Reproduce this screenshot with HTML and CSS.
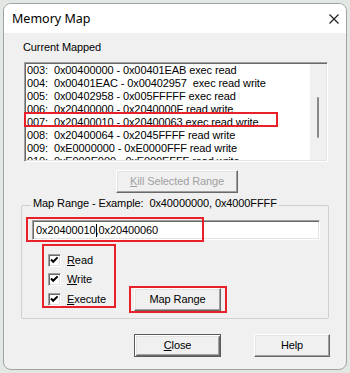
FILE: index.html
```html
<!DOCTYPE html>
<html>
<head>
<meta charset="utf-8">
<title>Memory Map</title>
<link rel="stylesheet" href="styles.css">
</head>
<body>
<div class="window">
  <div class="titlebar">
    <span class="title">Memory Map</span>
    <svg class="close-x" width="10" height="10" viewBox="0 0 10 10"><path d="M0.5 0.5L9.5 9.5M9.5 0.5L0.5 9.5" stroke="#1a1a1a" stroke-width="1.1" fill="none"/></svg>
  </div>
  <div class="client">
    <div class="label">Current Mapped</div>
    <div class="listbox">
      <div class="rows">
        <div class="row">003:  0x00400000 - 0x00401EAB exec read</div>
        <div class="row">004:  0x00401EAC - 0x00402957  exec read write</div>
        <div class="row">005:  0x00402958 - 0x005FFFFF exec read</div>
        <div class="row">006:  0x20400000 - 0x2040000F read write</div>
        <div class="row">007:  0x20400010 - 0x20400063 exec read write</div>
        <div class="row">008:  0x20400064 - 0x2045FFFF read write</div>
        <div class="row">009:  0xE0000000 - 0xE0000FFF read write</div>
        <div class="row">010:  0xE000E000 - 0xE000EFFF read write</div>
      </div>
      <div class="scrollbar"><div class="thumb"></div></div>
      <div class="mark mark-row"></div>
    </div>
    <div class="btn btn-kill disabled"><span><u>K</u>ill Selected Range</span></div>
    <div class="group">
      <div class="group-label">Map Range - Example:  0x40000000, 0x4000FFFF</div>
      <div class="textbox"><span>0x20400010</span><span class="caret"></span><span>,0x20400060</span></div>
      <div class="group-row">
        <div class="checks">
          <div class="cbrow first"><span class="cb"><svg width="13" height="13" viewBox="0 0 13 13"><path d="M3 5.5L5.2 7.8L9.6 3.4" stroke="#000" stroke-width="2" fill="none"/></svg></span><span class="cblabel"><u>R</u>ead</span></div>
          <div class="cbrow"><span class="cb"><svg width="13" height="13" viewBox="0 0 13 13"><path d="M3 5.5L5.2 7.8L9.6 3.4" stroke="#000" stroke-width="2" fill="none"/></svg></span><span class="cblabel"><u>W</u>rite</span></div>
          <div class="cbrow"><span class="cb"><svg width="13" height="13" viewBox="0 0 13 13"><path d="M3 5.5L5.2 7.8L9.6 3.4" stroke="#000" stroke-width="2" fill="none"/></svg></span><span class="cblabel"><u>E</u>xecute</span></div>
        </div>
        <div class="btn btn-map">Map Range</div>
      </div>
      <div class="mark mark-input"></div>
      <div class="mark mark-checks"></div>
      <div class="mark mark-map"></div>
    </div>
    <div class="footer">
      <div class="btn btn-close default"><span><u>C</u>lose</span></div>
      <div class="btn btn-help">Help</div>
    </div>
  </div>
</div>
</body>
</html>
```

FILE: styles.css
```css
html, body {
  margin: 0;
  padding: 0;
}
body {
  width: 350px;
  height: 373px;
  overflow: hidden;
  background: #e3e7e3;
  font-family: "Liberation Sans", Arial, sans-serif;
  font-size: 11px;
  letter-spacing: -0.1px;
  color: #000;
}
.window {
  margin: 3px 0 0 3px;
  width: 344px;
  height: 367px;
  box-sizing: border-box;
  border: 1px solid #a3a3a3;
  border-radius: 8px;
  background: #f0f0f0;
  overflow: hidden;
  display: flex;
  flex-direction: column;
}
.titlebar {
  height: 29px;
  flex-shrink: 0;
  background: #fff;
  display: flex;
  align-items: center;
  padding: 0 7px 0 8px;
}
.title {
  font-family: "Noto Sans", "Open Sans", sans-serif;
  font-size: 12.5px;
  letter-spacing: 0;
  color: #000;
}
.close-x {
  margin-left: auto;
  display: block;
}
.client {
  flex: 1;
  position: relative;
}
.label {
  margin: 8px 0 0 19px;
  height: 13px;
  line-height: 13px;
}
.listbox {
  position: relative;
  margin: 8px 0 0 20px;
  width: 304px;
  height: 100px;
  box-sizing: border-box;
  border: 1px solid;
  border-color: #a0a0a0 #fff #fff #a0a0a0;
  box-shadow: inset 1px 1px 0 #696969, inset -1px -1px 0 #e3e3e3;
  padding: 1px;
  display: flex;
  background: #fff;
}
.rows {
  flex: 1;
  overflow: hidden;
  padding-left: 1px;
  background: #fff;
}
.row {
  height: 13px;
  line-height: 13px;
  white-space: pre;
}
.scrollbar {
  width: 16px;
  background: #f0f0f0;
}
.thumb {
  margin: 33px 0 0 7px;
  width: 2px;
  height: 41px;
  background: #8a8a8a;
  border-radius: 1px;
}
.mark {
  position: absolute;
  box-sizing: border-box;
  border: 2px solid #e8202a;
}
.mark-row {
  left: -1px;
  top: 49px;
  width: 254px;
  height: 15px;
}
.btn {
  box-sizing: border-box;
  height: 23px;
  background: #f0f0f0;
  border: 1px solid;
  border-color: #fff #696969 #696969 #fff;
  box-shadow: inset -1px -1px 0 #a0a0a0, inset 1px 1px 0 #e3e3e3;
  display: flex;
  align-items: center;
  justify-content: center;
  line-height: 13px;
}
.btn.disabled {
  color: #a0a0a0;
}
.btn.default {
  border: 1px solid #5a5a5a;
  box-shadow: inset 1px 1px 0 #fff, inset -1px -1px 0 #696969, inset 2px 2px 0 #e3e3e3, inset -2px -2px 0 #a0a0a0;
}
.btn-kill {
  margin: 8px 0 0 112px;
  width: 122px;
}
.group {
  position: relative;
  margin: 12px 0 0 17px;
  width: 308px;
  height: 114px;
  box-sizing: border-box;
  border: 1px solid #d0d0d0;
  border-radius: 2px;
}
.group-label {
  position: absolute;
  left: 9px;
  top: -9px;
  padding: 0 2px;
  background: #f0f0f0;
  line-height: 13px;
  white-space: pre;
}
.textbox {
  margin: 14px 0 0 10px;
  width: 288px;
  height: 20px;
  box-sizing: border-box;
  border: 1px solid;
  border-color: #a0a0a0 #fff #fff #a0a0a0;
  box-shadow: inset 1px 1px 0 #696969, inset -1px -1px 0 #e3e3e3;
  background: #fff;
  padding: 0 0 0 3px;
  display: flex;
  align-items: center;
  line-height: 13px;
  white-space: pre;
}
.caret {
  width: 1px;
  height: 13px;
  background: #000;
  margin-right: -1px;
}
.group-row {
  display: flex;
  margin: 11px 0 0 26px;
}
.checks {
  width: 86px;
}
.cbrow {
  height: 20px;
  display: flex;
  align-items: flex-start;
}
.cbrow.first {
  height: 19px;
}
.cb {
  margin-top: 3px;
  width: 13px;
  height: 13px;
  box-sizing: border-box;
  border: 1px solid;
  border-color: #a0a0a0 #fff #fff #a0a0a0;
  box-shadow: inset 1px 1px 0 #696969, inset -1px -1px 0 #e3e3e3;
  background: #fff;
  position: relative;
}
.cb svg {
  position: absolute;
  left: -1px;
  top: -1px;
}
.cblabel {
  margin: 3px 0 0 6px;
  line-height: 13px;
}
.btn-map {
  margin-top: 37px;
  width: 87px;
}
.mark-input {
  left: 4px;
  top: 11px;
  width: 178px;
  height: 25px;
}
.mark-checks {
  left: 20px;
  top: 38px;
  width: 74px;
  height: 64px;
}
.mark-map {
  left: 107px;
  top: 80px;
  width: 98px;
  height: 27px;
}
.footer {
  display: flex;
  margin: 15px 0 0 130px;
}
.btn-close {
  width: 87px;
}
.btn-help {
  margin-left: 33px;
  width: 76px;
}
```
